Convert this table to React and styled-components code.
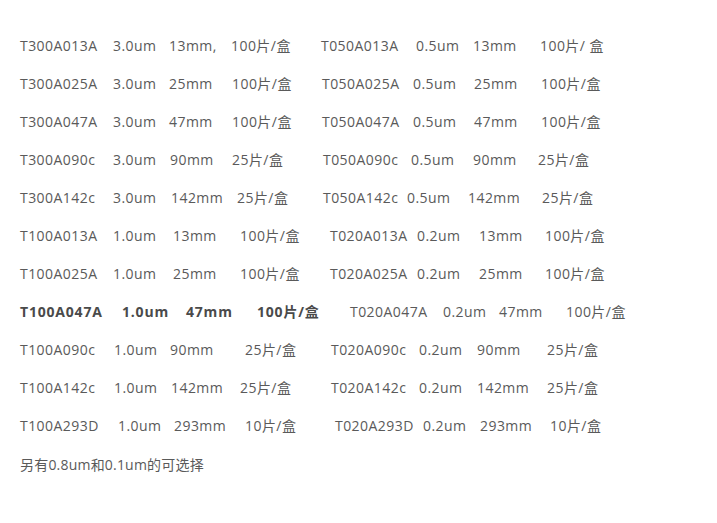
import React from "react";
import styled, { createGlobalStyle } from "styled-components";

const Global = createGlobalStyle`
  html, body { margin: 0; padding: 0; background: #ffffff; }
  body { font-family: "Open Sans", "Noto Sans CJK SC", sans-serif; }
`;

const Page = styled.div`
  padding: 27px 0 0 20px;
  color: #5a5a5a;
  font-size: 14px;
`;

const Row = styled.div`
  display: flex;
  height: 38px;
  line-height: 38px;
  white-space: nowrap;
`;

const Cell = styled.span`
  flex: none;
  width: ${(p) => (p.$w != null ? `${p.$w}px` : "auto")};
`;

const Note = styled.p`
  margin: 1px 0 0;
  line-height: 38px;
  font-size: 14px;
  letter-spacing: 0.2px;
`;

const Strong = styled.span`
  font-weight: 700;
  color: #4a4a4a;
  letter-spacing: 0.8px;
`;

const Plain = styled.span`
  font-weight: 400;
  color: #5a5a5a;
  letter-spacing: 0.45px;
`;

const rows = [
  [["T300A013A", 20], ["3.0um", 113], ["13mm,", 169], ["100片/盒", 231], ["T050A013A", 321], ["0.5um", 416], ["13mm", 473], ["100片/ 盒", 540]],
  [["T300A025A", 20], ["3.0um", 113], ["25mm", 169], ["100片/盒", 232], ["T050A025A", 322], ["0.5um", 413], ["25mm", 474], ["100片/盒", 541]],
  [["T300A047A", 20], ["3.0um", 113], ["47mm", 169], ["100片/盒", 232], ["T050A047A", 322], ["0.5um", 413], ["47mm", 474], ["100片/盒", 541]],
  [["T300A090c", 20], ["3.0um", 113], ["90mm", 170], ["25片/盒", 232], ["T050A090c", 323], ["0.5um", 411], ["90mm", 473], ["25片/盒", 538]],
  [["T300A142c", 20], ["3.0um", 113], ["142mm", 171], ["25片/盒", 237], ["T050A142c", 323], ["0.5um", 407], ["142mm", 468], ["25片/盒", 542]],
  [["T100A013A", 20], ["1.0um", 113], ["13mm", 173], ["100片/盒", 240], ["T020A013A", 330], ["0.2um", 417], ["13mm", 479], ["100片/盒", 545]],
  [["T100A025A", 20], ["1.0um", 113], ["25mm", 173], ["100片/盒", 240], ["T020A025A", 330], ["0.2um", 417], ["25mm", 479], ["100片/盒", 545]],
  [["T100A047A", 20, true], ["1.0um", 122, true], ["47mm", 186, true], ["100片/盒", 257, true], ["T020A047A", 350], ["0.2um", 443], ["47mm", 499], ["100片/盒", 566]],
  [["T100A090c", 20], ["1.0um", 114], ["90mm", 170], ["25片/盒", 245], ["T020A090c", 331], ["0.2um", 419], ["90mm", 477], ["25片/盒", 547]],
  [["T100A142c", 20], ["1.0um", 114], ["142mm", 171], ["25片/盒", 240], ["T020A142c", 331], ["0.2um", 419], ["142mm", 477], ["25片/盒", 547]],
  [["T100A293D", 20], ["1.0um", 118], ["293mm", 174], ["10片/盒", 245], ["T020A293D", 335], ["0.2um", 423], ["293mm", 480], ["10片/盒", 550]],
];

export default function App() {
  return (
    <>
      <Global />
      <Page>
        {rows.map((cells, ri) => (
          <Row key={ri}>
            {cells.map(([text, x, bold], ci) => {
              const next = cells[ci + 1];
              const w = next ? next[1] - x : null;
              const Txt = bold ? Strong : Plain;
              return (
                <Cell key={ci} $w={w}>
                  <Txt>{text}</Txt>
                </Cell>
              );
            })}
          </Row>
        ))}
        <Note>另有0.8um和0.1um的可选择</Note>
      </Page>
    </>
  );
}
